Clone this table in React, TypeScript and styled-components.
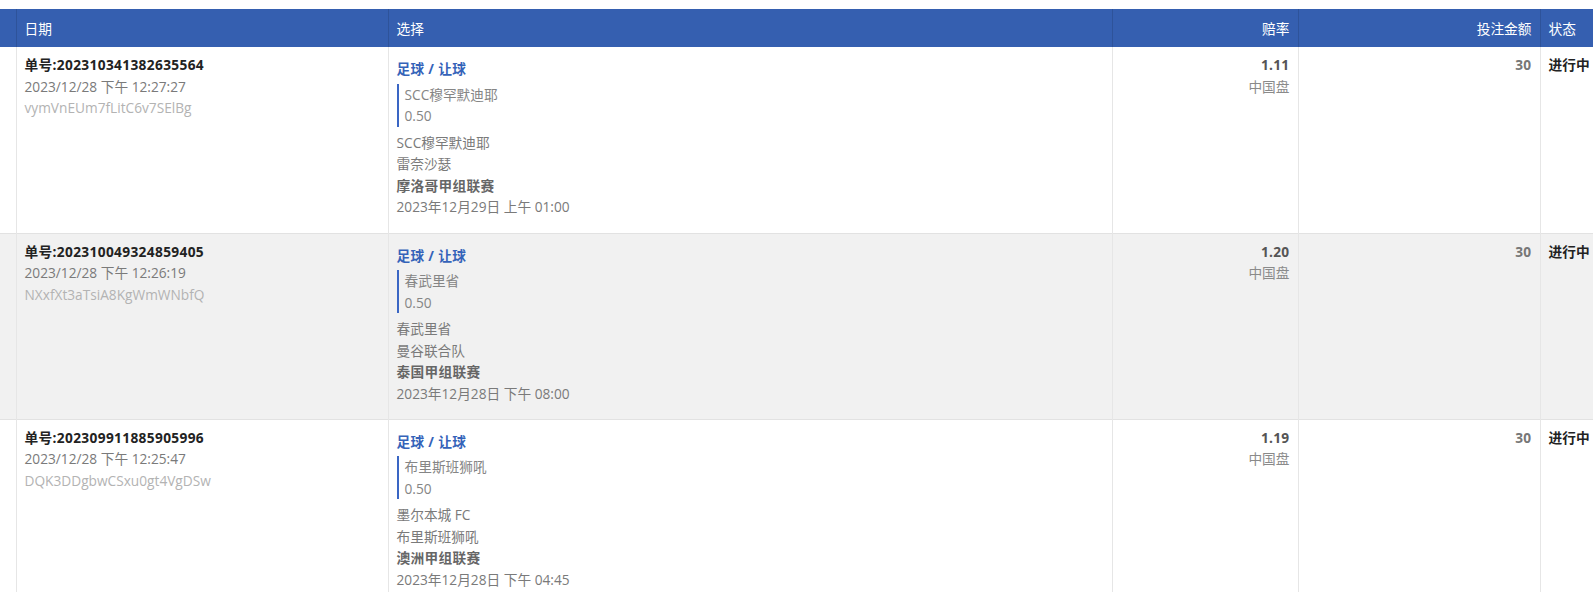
import React from 'react';
import styled, { createGlobalStyle } from 'styled-components';

const GlobalStyle = createGlobalStyle`
  html, body {
    margin: 0;
    padding: 0;
    background: #fff;
    overflow: hidden;
  }
  body {
    font-family: "Open Sans", "Noto Sans CJK SC", sans-serif;
    font-size: 13.7px;
    color: #333;
  }
`;

const Page = styled.div`
  padding-top: 9px;
  width: 1600px;
`;

const Table = styled.table`
  width: 1600px;
  border-collapse: collapse;
  table-layout: fixed;
`;

const HeadCell = styled.th<{ $align?: 'left' | 'right' }>`
  background: #355fb0;
  color: #fff;
  font-weight: 400;
  font-size: 13.7px;
  height: 38px;
  padding: 0 8px;
  text-align: ${p => p.$align || 'left'};
  border-left: 1px solid rgba(0, 0, 0, 0.12);
  white-space: nowrap;
  &:first-child {
    border-left: none;
  }
`;

const Row = styled.tr<{ $striped?: boolean }>`
  height: 186px;
  background: ${p => (p.$striped ? '#f1f1f1' : '#fff')};
  border-bottom: 1px solid #e2e2e2;
`;

const Cell = styled.td<{ $align?: 'left' | 'right' }>`
  vertical-align: top;
  padding: 7px 8px;
  line-height: 21.5px;
  text-align: ${p => p.$align || 'left'};
  border-left: 1px solid #e6e6e6;
  white-space: nowrap;
  &:first-child {
    border-left: none;
  }
`;

const OrderNo = styled.div`
  font-weight: 700;
  color: #222;
  letter-spacing: 0.35px;
`;

const Stamp = styled.div`
  color: #7a7a7a;
`;

const Token = styled.div`
  color: #b3b3b3;
`;

const SportLabel = styled.div`
  margin-top: 4px;
  font-weight: 700;
  color: #3563b9;
  letter-spacing: 0.3px;
`;

const PickBlock = styled.div`
  margin: 4px 0 5px;
  padding-left: 6px;
  border-left: 2px solid #3a66c4;
  color: #858585;
`;

const Muted = styled.div`
  color: #7a7a7a;
`;

const League = styled.div`
  font-weight: 700;
  color: #666;
  letter-spacing: 0.3px;
`;

const Odds = styled.div`
  font-weight: 700;
  color: #555;
  letter-spacing: 0.3px;
`;

const Market = styled.div`
  color: #8a8a8a;
`;

const Amount = styled.div`
  font-weight: 700;
  color: #777;
  letter-spacing: 0.3px;
`;

const Status = styled.div`
  font-weight: 700;
  color: #222;
`;

type Bet = {
  no: string;
  time: string;
  token: string;
  pick: string;
  line: string;
  home: string;
  away: string;
  league: string;
  kickoff: string;
  odds: string;
  amount: string;
};

const bets: Bet[] = [
  {
    no: '202310341382635564',
    time: '2023/12/28 下午 12:27:27',
    token: 'vymVnEUm7fLitC6v7SElBg',
    pick: 'SCC穆罕默迪耶',
    line: '0.50',
    home: 'SCC穆罕默迪耶',
    away: '雷奈沙瑟',
    league: '摩洛哥甲组联赛',
    kickoff: '2023年12月29日 上午 01:00',
    odds: '1.11',
    amount: '30',
  },
  {
    no: '202310049324859405',
    time: '2023/12/28 下午 12:26:19',
    token: 'NXxfXt3aTsiA8KgWmWNbfQ',
    pick: '春武里省',
    line: '0.50',
    home: '春武里省',
    away: '曼谷联合队',
    league: '泰国甲组联赛',
    kickoff: '2023年12月28日 下午 08:00',
    odds: '1.20',
    amount: '30',
  },
  {
    no: '202309911885905996',
    time: '2023/12/28 下午 12:25:47',
    token: 'DQK3DDgbwCSxu0gt4VgDSw',
    pick: '布里斯班狮吼',
    line: '0.50',
    home: '墨尔本城 FC',
    away: '布里斯班狮吼',
    league: '澳洲甲组联赛',
    kickoff: '2023年12月28日 下午 04:45',
    odds: '1.19',
    amount: '30',
  },
];

const App: React.FC = () => {
  return (
    <Page>
      <GlobalStyle />
      <Table>
        <colgroup>
          <col style={{ width: 16 }} />
          <col style={{ width: 372 }} />
          <col style={{ width: 724 }} />
          <col style={{ width: 186 }} />
          <col style={{ width: 242 }} />
          <col style={{ width: 60 }} />
        </colgroup>
        <thead>
          <tr>
            <HeadCell />
            <HeadCell>日期</HeadCell>
            <HeadCell>选择</HeadCell>
            <HeadCell $align="right">赔率</HeadCell>
            <HeadCell $align="right">投注金额</HeadCell>
            <HeadCell>状态</HeadCell>
          </tr>
        </thead>
        <tbody>
          {bets.map((b, i) => (
            <Row key={b.no} $striped={i % 2 === 1}>
              <Cell />
              <Cell>
                <OrderNo>单号:{b.no}</OrderNo>
                <Stamp>{b.time}</Stamp>
                <Token>{b.token}</Token>
              </Cell>
              <Cell>
                <SportLabel>足球 / 让球</SportLabel>
                <PickBlock>
                  <div>{b.pick}</div>
                  <div>{b.line}</div>
                </PickBlock>
                <Muted>{b.home}</Muted>
                <Muted>{b.away}</Muted>
                <League>{b.league}</League>
                <Muted>{b.kickoff}</Muted>
              </Cell>
              <Cell $align="right">
                <Odds>{b.odds}</Odds>
                <Market>中国盘</Market>
              </Cell>
              <Cell $align="right">
                <Amount>{b.amount}</Amount>
              </Cell>
              <Cell>
                <Status>进行中</Status>
              </Cell>
            </Row>
          ))}
        </tbody>
      </Table>
    </Page>
  );
};

export default App;
